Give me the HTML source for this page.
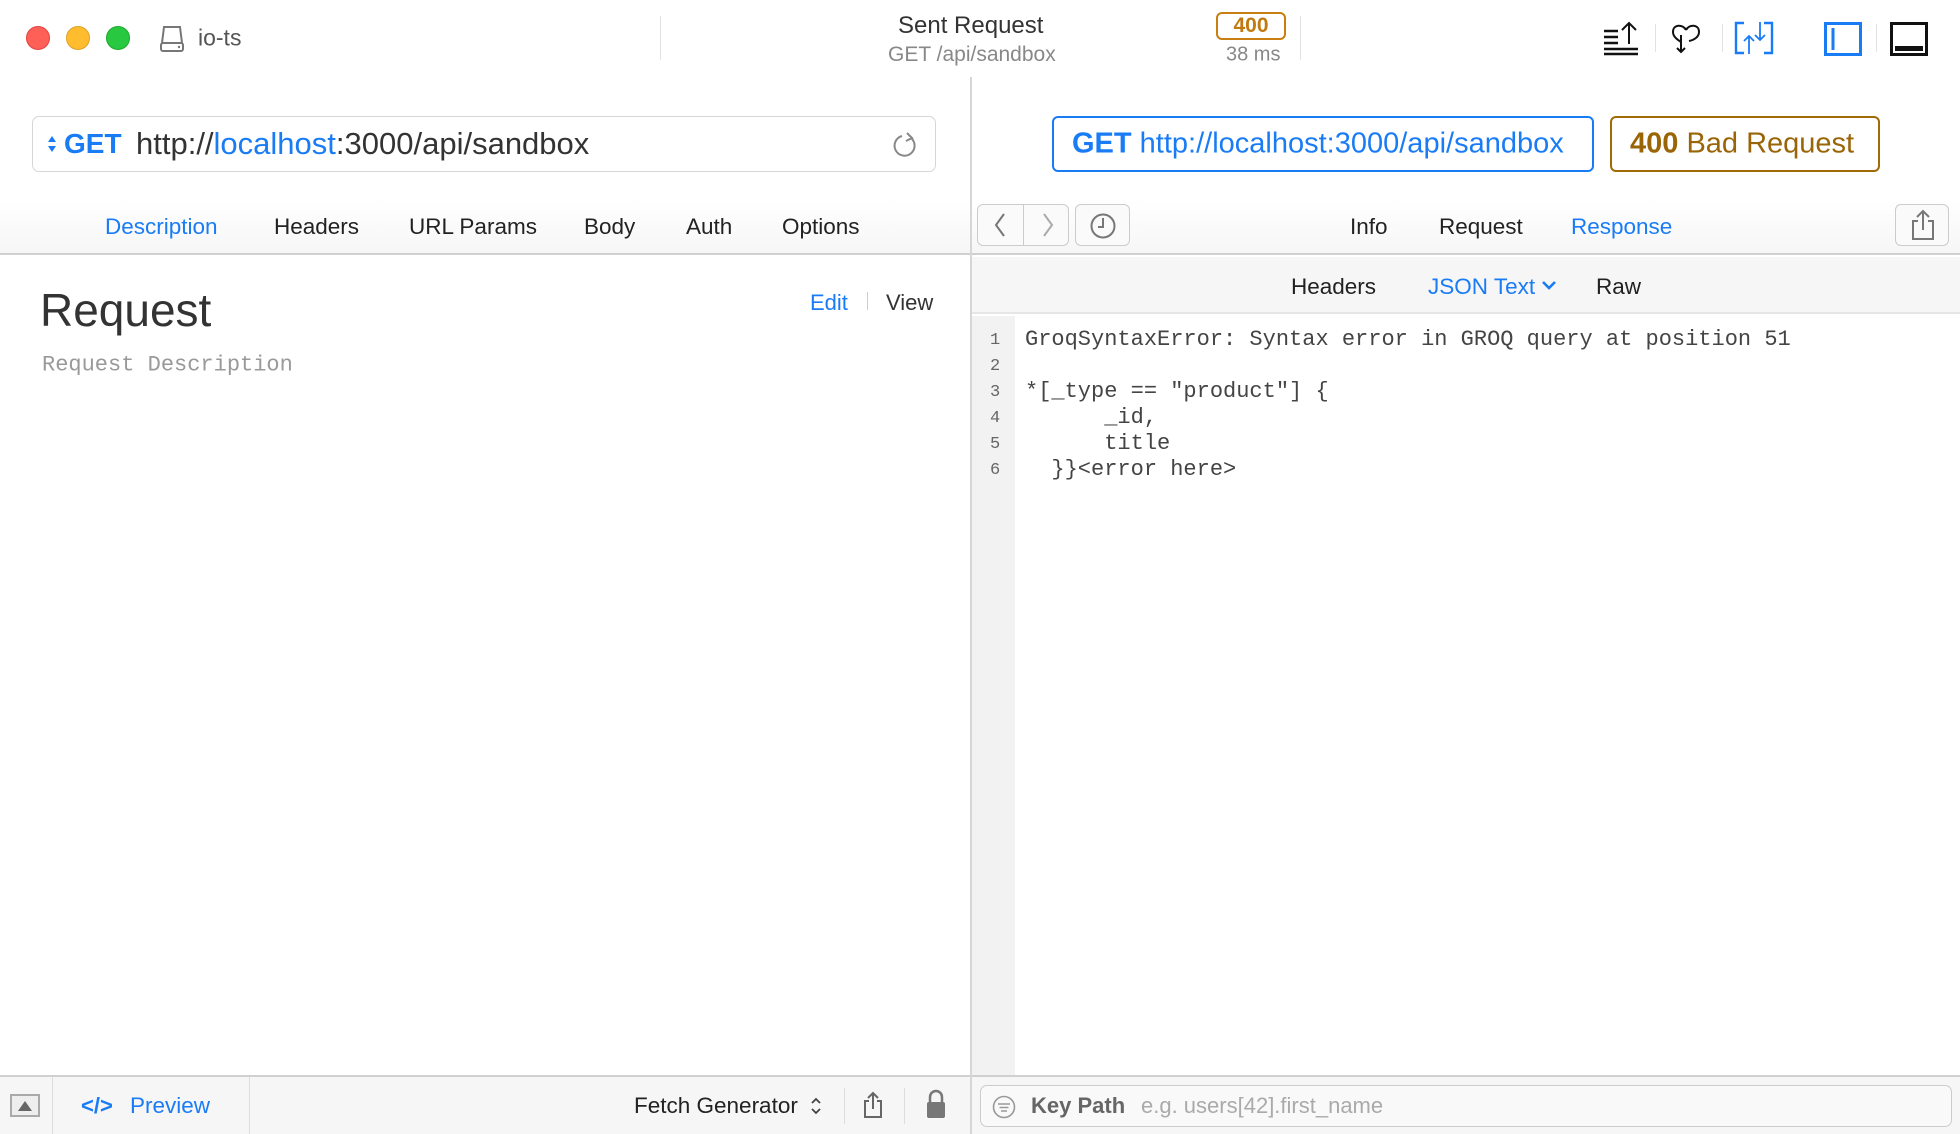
<!DOCTYPE html>
<html><head><meta charset="utf-8"><style>
*{margin:0;padding:0;box-sizing:border-box}
body{width:1960px;height:1134px;position:relative;overflow:hidden;background:#fff;font-family:"Liberation Sans",sans-serif;color:#222}
.a{position:absolute;white-space:nowrap}
.c{transform:translateY(-50%)}
.mono{font-family:"Liberation Mono",monospace}
.blue{color:#1a7cf5}
</style></head><body>
<div class="a" style="left:26px;top:26px;width:24px;height:24px;border-radius:50%;background:#fe5f57;border:1px solid #e0443e"></div>
<div class="a" style="left:66px;top:26px;width:24px;height:24px;border-radius:50%;background:#febc2e;border:1px solid #dea123"></div>
<div class="a" style="left:106px;top:26px;width:24px;height:24px;border-radius:50%;background:#28c840;border:1px solid #1aab29"></div>
<svg class="a" style="left:158px;top:24px" width="30" height="30" viewBox="0 0 30 30"><path d="M6 3h16l2 16H4z" fill="none" stroke="#777" stroke-width="2"/><rect x="3" y="19" width="22" height="8" rx="2" fill="none" stroke="#777" stroke-width="2"/><circle cx="21" cy="23" r="1.2" fill="#777"/></svg>
<div class="a c" style="left:198px;top:38px;font-size:23px;color:#555">io-ts</div>
<div class="a" style="left:660px;top:16px;width:1px;height:44px;background:#e2e2e2"></div>
<div class="a c" style="left:898px;top:26px;font-size:24px;color:#333">Sent Request</div>
<div class="a c" style="left:888px;top:55px;font-size:21px;color:#888">GET /api/sandbox</div>
<div class="a" style="left:1216px;top:12px;width:70px;height:28px;border:2px solid #c87e10;border-radius:6px;color:#c07a10;font-size:21px;text-align:center;line-height:24px;font-weight:bold">400</div>
<div class="a c" style="left:1226px;top:55px;font-size:20px;color:#888">38 ms</div>
<div class="a" style="left:1300px;top:16px;width:1px;height:44px;background:#e2e2e2"></div>
<svg class="a" style="left:1602px;top:20px" width="40" height="36" viewBox="0 0 40 36"><path d="M2 11h14M2 17h14M2 23h14M2 29h34M2 34h34" stroke="#111" stroke-width="2.4"/><path d="M27 24V3M20 10l7-7 7 7" fill="none" stroke="#111" stroke-width="2"/></svg>
<div class="a" style="left:1655px;top:24px;width:1px;height:28px;background:#e2e2e2"></div>
<svg class="a" style="left:1668px;top:20px" width="36" height="36" viewBox="0 0 36 36"><path d="M18 10c-3-6-13-6-13 2 0 5 5 8 8 10M18 10c3-6 13-6 13 2 0 5-5 8-10 9M13 15v17M9 28l4 4 4-4" fill="none" stroke="#111" stroke-width="2"/></svg>
<div class="a" style="left:1722px;top:24px;width:1px;height:28px;background:#e2e2e2"></div>
<svg class="a" style="left:1734px;top:20px" width="40" height="36" viewBox="0 0 40 36"><path d="M10 3H2v30h8M30 3h8v30h-8" fill="none" stroke="#1a7cf5" stroke-width="2.4"/><path d="M26 2v18M21 15l5 5 5-5M15 34V16M10 21l5-5 5 5" fill="none" stroke="#1a7cf5" stroke-width="1.8"/></svg>
<svg class="a" style="left:1824px;top:22px" width="38" height="34" viewBox="0 0 38 34"><rect x="1.5" y="1.5" width="35" height="31" fill="none" stroke="#1a7cf5" stroke-width="3"/><path d="M9 6v22" stroke="#1a7cf5" stroke-width="3"/></svg>
<div class="a" style="left:1876px;top:24px;width:1px;height:28px;background:#e2e2e2"></div>
<svg class="a" style="left:1890px;top:22px" width="38" height="34" viewBox="0 0 38 34"><rect x="1.5" y="1.5" width="35" height="31" fill="none" stroke="#111" stroke-width="3"/><rect x="5" y="24" width="28" height="5" fill="#111"/></svg>

<div class="a" style="left:970px;top:77px;width:2px;height:1000px;background:#d6d6d6"></div>

<div class="a" style="left:32px;top:116px;width:904px;height:56px;border:1.5px solid #d6d6d6;border-radius:7px"></div>
<svg class="a" style="left:47px;top:134px" width="10" height="20" viewBox="0 0 10 20"><path d="M1 8l4-6 4 6zM1 12l4 6 4-6z" fill="#1a7cf5"/></svg>
<div class="a c blue" style="left:64px;top:144px;font-size:28px;font-weight:bold">GET</div>
<div class="a c" style="left:136px;top:144px;font-size:31px;color:#333">http://<span class="blue">localhost</span>:3000/api/sandbox</div>
<svg class="a" style="left:892px;top:130px" width="28" height="30" viewBox="0 0 28 30"><path d="M19 8a10 10 0 1 1-9-2" fill="none" stroke="#888" stroke-width="2"/><path d="M15 3l5 5-6 3" fill="none" stroke="#888" stroke-width="2"/></svg>

<div class="a" style="left:0;top:200px;width:970px;height:55px;background:linear-gradient(#fff,#f6f6f6);border-bottom:2px solid #d0d0d0"></div>
<div class="a c blue" style="left:105px;top:227px;font-size:22.5px">Description</div>
<div class="a c" style="left:274px;top:227px;font-size:22.5px">Headers</div>
<div class="a c" style="left:409px;top:227px;font-size:22.5px">URL Params</div>
<div class="a c" style="left:584px;top:227px;font-size:22.5px">Body</div>
<div class="a c" style="left:686px;top:227px;font-size:22.5px">Auth</div>
<div class="a c" style="left:782px;top:227px;font-size:22.5px">Options</div>

<div class="a c" style="left:40px;top:310px;font-size:46px;color:#333">Request</div>
<div class="a c mono" style="left:42px;top:365px;font-size:22px;color:#999">Request Description</div>
<div class="a c blue" style="left:810px;top:303px;font-size:22px">Edit</div>
<div class="a" style="left:867px;top:292px;width:1px;height:18px;background:#ccc"></div>
<div class="a c" style="left:886px;top:303px;font-size:22px;color:#333">View</div>

<div class="a" style="left:1052px;top:116px;width:542px;height:56px;border:2px solid #1a7cf5;border-radius:6px"></div>
<div class="a c blue" style="left:1072px;top:144px;font-size:29px"><b>GET</b> http://localhost:3000/api/sandbox</div>
<div class="a" style="left:1610px;top:116px;width:270px;height:56px;border:2px solid #a06a06;border-radius:6px"></div>
<div class="a c" style="left:1630px;top:144px;font-size:29px;color:#9a6506"><b>400</b> Bad Request</div>

<div class="a" style="left:972px;top:200px;width:988px;height:55px;background:linear-gradient(#fff,#f6f6f6);border-bottom:2px solid #d0d0d0"></div>
<div class="a" style="left:977px;top:204px;width:92px;height:42px;border:1.5px solid #ccc;border-radius:6px;background:#fafafa"></div>
<div class="a" style="left:1023px;top:205px;width:1px;height:40px;background:#ccc"></div>
<svg class="a" style="left:990px;top:212px" width="70" height="26" viewBox="0 0 70 26"><path d="M14 2L6 13l8 11" fill="none" stroke="#777" stroke-width="2"/><path d="M54 2l8 11-8 11" fill="none" stroke="#aaa" stroke-width="2"/></svg>
<div class="a" style="left:1075px;top:204px;width:55px;height:42px;border:1.5px solid #ccc;border-radius:6px;background:#fafafa"></div>
<svg class="a" style="left:1089px;top:212px" width="28" height="28" viewBox="0 0 28 28"><circle cx="14" cy="14" r="11.5" fill="none" stroke="#777" stroke-width="2"/><path d="M14 6v9H9" fill="none" stroke="#777" stroke-width="2"/></svg>
<div class="a c" style="left:1350px;top:227px;font-size:22.5px">Info</div>
<div class="a c" style="left:1439px;top:227px;font-size:22.5px">Request</div>
<div class="a c blue" style="left:1571px;top:227px;font-size:22.5px">Response</div>
<div class="a" style="left:1895px;top:204px;width:54px;height:42px;border:1.5px solid #ccc;border-radius:6px;background:#fafafa"></div>
<svg class="a" style="left:1910px;top:208px" width="26" height="34" viewBox="0 0 26 34"><path d="M8 13H3v18h20V13h-5M13 22V3M7 9l6-6 6 6" fill="none" stroke="#777" stroke-width="2"/></svg>

<div class="a" style="left:972px;top:257px;width:988px;height:57px;background:#f6f6f6;border-bottom:2px solid #e6e6e6"></div>
<div class="a c" style="left:1291px;top:287px;font-size:22.5px">Headers</div>
<div class="a c blue" style="left:1428px;top:287px;font-size:22.5px">JSON Text</div>
<svg class="a" style="left:1541px;top:280px" width="16" height="12" viewBox="0 0 16 12"><path d="M2 2l6 6 6-6" fill="none" stroke="#1a7cf5" stroke-width="2.6"/></svg>
<div class="a c" style="left:1596px;top:287px;font-size:22.5px">Raw</div>

<div class="a" style="left:972px;top:316px;width:43px;height:760px;background:#f2f2f2"></div>
<div class="a mono" style="left:990px;top:328px;font-size:17px;line-height:26px;color:#666">1<br>2<br>3<br>4<br>5<br>6</div>
<div class="a mono" style="left:1025px;top:327px;font-size:22px;line-height:26px;color:#444;white-space:pre">GroqSyntaxError: Syntax error in GROQ query at position 51

*[_type == "product"] {
      _id,
      title
  }}&lt;error here&gt;</div>

<div class="a" style="left:0;top:1075px;width:1960px;height:59px;background:#f6f6f6;border-top:2px solid #d0d0d0"></div>
<div class="a" style="left:970px;top:1075px;width:2px;height:59px;background:#d6d6d6"></div>
<div class="a" style="left:10px;top:1094px;width:30px;height:23px;border:2px solid #aaa;background:#eee"></div>
<svg class="a" style="left:16px;top:1099px" width="18" height="14" viewBox="0 0 18 14"><path d="M2 12L9 2l7 10z" fill="#666"/></svg>
<div class="a" style="left:52px;top:1077px;width:1px;height:57px;background:#ddd"></div>
<div class="a c blue" style="left:81px;top:1106px;font-size:22px;font-weight:bold">&lt;/&gt;</div>
<div class="a c blue" style="left:130px;top:1106px;font-size:22.5px">Preview</div>
<div class="a" style="left:249px;top:1077px;width:1px;height:57px;background:#ddd"></div>
<div class="a c" style="left:634px;top:1106px;font-size:22.5px">Fetch Generator</div>
<svg class="a" style="left:810px;top:1096px" width="12" height="20" viewBox="0 0 12 20"><path d="M2 7l4-4 4 4M2 13l4 4 4-4" fill="none" stroke="#444" stroke-width="1.8"/></svg>
<div class="a" style="left:844px;top:1088px;width:1px;height:36px;background:#ddd"></div>
<svg class="a" style="left:862px;top:1090px" width="22" height="30" viewBox="0 0 22 30"><path d="M7 11H3v16h16V11h-4M11 19V3M6 8l5-5 5 5" fill="none" stroke="#666" stroke-width="2"/></svg>
<div class="a" style="left:904px;top:1088px;width:1px;height:36px;background:#ddd"></div>
<svg class="a" style="left:925px;top:1088px" width="22" height="32" viewBox="0 0 22 32"><path d="M5 14V9a6 6 0 0 1 12 0v5" fill="none" stroke="#777" stroke-width="2.5"/><rect x="2" y="14" width="18" height="16" rx="2" fill="#777"/></svg>
<div class="a" style="left:980px;top:1085px;width:972px;height:42px;border:1.5px solid #ccc;border-radius:7px;background:#f9f9f9"></div>
<svg class="a" style="left:992px;top:1095px" width="24" height="24" viewBox="0 0 24 24"><circle cx="12" cy="12" r="10.5" fill="none" stroke="#999" stroke-width="1.6"/><path d="M6 9h12M7.5 12.5h9M9 16h6" stroke="#999" stroke-width="1.6"/></svg>
<div class="a c" style="left:1031px;top:1106px;font-size:22px;color:#666;font-weight:bold">Key Path</div>
<div class="a c" style="left:1141px;top:1106px;font-size:22px;color:#aaa">e.g. users[42].first_name</div>
</body></html>
